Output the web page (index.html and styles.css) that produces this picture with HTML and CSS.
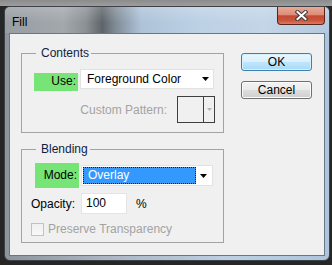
FILE: index.html
```html
<!DOCTYPE html>
<html>
<head>
<meta charset="utf-8">
<title>Fill</title>
<link rel="stylesheet" href="styles.css">
</head>
<body>
<div class="window">
  <div class="titlebar">
    <span class="title">Fill</span>
    <div class="close">
      <svg width="13" height="11" viewBox="0 0 13 11">
        <path d="M2.5 2 L10.5 9 M10.5 2 L2.5 9" stroke="#3b3b3b" stroke-width="4" stroke-linecap="square"/>
        <path d="M2.5 2 L10.5 9 M10.5 2 L2.5 9" stroke="#ffffff" stroke-width="2" stroke-linecap="square"/>
      </svg>
    </div>
  </div>
  <div class="client">
    <div class="groups">
      <fieldset class="group contents">
        <legend>Contents</legend>
        <div class="row use-row">
          <label class="hl">Use:</label>
          <div class="select use-select">
            <span class="value">Foreground Color</span>
            <svg class="arrow" width="7" height="4" viewBox="0 0 7 4"><polygon points="0,0 7,0 3.5,4" fill="#000"/></svg>
          </div>
        </div>
        <div class="row pattern-row">
          <span class="disabled">Custom Pattern:</span>
          <div class="pattern">
            <div class="swatch"></div>
            <div class="pdrop"><svg width="5" height="3" viewBox="0 0 5 3"><polygon points="0,0 5,0 2.5,3" fill="#b4b4b4"/></svg></div>
          </div>
        </div>
      </fieldset>
      <fieldset class="group blending">
        <legend>Blending</legend>
        <div class="row mode-row">
          <label class="hl mode-hl">Mode:</label>
          <div class="select mode-select">
            <span class="value selected">Overlay</span>
            <svg class="arrow" width="7" height="4" viewBox="0 0 7 4"><polygon points="0,0 7,0 3.5,4" fill="#000"/></svg>
          </div>
        </div>
        <div class="row opacity-row">
          <label class="op-label">Opacity:</label>
          <div class="input">100</div>
          <span class="pct">%</span>
        </div>
        <div class="row check-row">
          <span class="checkbox"></span>
          <span class="disabled">Preserve Transparency</span>
        </div>
      </fieldset>
    </div>
    <div class="buttons">
      <button class="btn default">OK</button>
      <button class="btn">Cancel</button>
    </div>
  </div>
</div>
</body>
</html>
```

FILE: styles.css
```css
html, body {
  margin: 0;
  padding: 0;
}
body {
  width: 332px;
  height: 265px;
  overflow: hidden;
  background: linear-gradient(to bottom, #8c8c8c 0, #9d9d9d 6px, #262626 6px);
  font-family: "Liberation Sans", Arial, sans-serif;
  font-size: 12px;
  color: #000;
}
.window {
  box-sizing: border-box;
  margin: 6px 0 0 4px;
  width: 326px;
  height: 255px;
  border: 1px solid #3d4249;
  border-radius: 6px;
  background: linear-gradient(to right, #8d949b 0, #aab5c2 30%, #bcd0e4 70%, #adc4db 100%);
  display: flex;
  flex-direction: column;
  overflow: hidden;
}
.titlebar {
  height: 26px;
  flex: none;
  display: flex;
  align-items: flex-start;
  background:
    linear-gradient(to bottom, rgba(255,255,255,0.18), rgba(255,255,255,0) 60%),
    linear-gradient(to right, #979da2 0, #a3a8ad 18%, #8b9095 25%, #5e6469 30%, #7f8a95 34%, #aec3d8 42%, #bdd1e5 60%, #c3d5e7 80%, #b4c9de 100%);
}
.title {
  padding: 9px 0 0 7px;
  font-size: 12px;
  line-height: 12px;
  color: #000;
}
.close {
  margin-left: auto;
  margin-right: 4px;
  width: 48px;
  height: 18px;
  box-sizing: border-box;
  border: 1px solid #5a2518;
  border-top: none;
  border-radius: 0 0 4px 4px;
  background: linear-gradient(to bottom, #e9aa98 0, #dc8c77 45%, #c54a31 52%, #c9563f 80%, #dd7b62 100%);
  display: flex;
  align-items: center;
  justify-content: center;
}
.client {
  flex: 1;
  margin: 0 4px 4px 4px;
  border: 1px solid #66778a;
  background: #f0f0f0;
  display: flex;
  align-items: flex-start;
  padding: 12px 0 0 11px;
}
.groups {
  width: 203px;
  display: flex;
  flex-direction: column;
}
.group {
  margin: 0;
  min-width: 0;
  border: 1px solid #a3a3a3;
  padding: 0 8px 9px 12px;
}
.group legend {
  padding: 0 2px 0 5px;
  margin-left: 2px;
  line-height: 15px;
  color: #0d1f3f;
}
.contents {
  padding-top: 8px;
}
.blending {
  margin-top: 9px;
  padding-top: 6px;
  padding-bottom: 6px;
}
.row {
  display: flex;
  align-items: flex-start;
}
.hl {
  box-sizing: border-box;
  background: #77e476;
  width: 44px;
  text-align: right;
  padding-right: 2px;
}
.use-row .hl {
  margin-top: 4px;
  height: 18px;
  line-height: 16px;
}
.select {
  box-sizing: border-box;
  background: #fff;
  border: 1px solid #e2e2e2;
  display: flex;
  align-items: center;
}
.select .arrow {
  margin-left: auto;
  margin-right: 4px;
  flex: none;
}
.use-select {
  margin-left: 2px;
  width: 134px;
  height: 20px;
}
.use-select .value {
  padding-left: 6px;
}
.pattern-row {
  margin-top: 5px;
  justify-content: flex-end;
  align-items: center;
  gap: 10px;
}
.disabled {
  color: #a3a3a3;
}
.pattern {
  width: 38px;
  height: 27px;
  box-sizing: border-box;
  border: 1px solid #3f3f3f;
  display: flex;
  background: #f0f0f0;
}
.swatch {
  flex: 1;
  border-right: 1px solid #3f3f3f;
}
.pdrop {
  width: 10px;
  display: flex;
  align-items: center;
  justify-content: center;
}
.mode-hl {
  margin-left: 1px;
  height: 25px;
  line-height: 24px;
}
.mode-select {
  margin-left: 2px;
  margin-top: 2px;
  width: 132px;
  height: 21px;
  padding: 1px;
}
.mode-select .value {
  box-sizing: border-box;
  flex: 0 0 113px;
  height: 17px;
  line-height: 15px;
  background: #3399ff;
  color: #fff;
  border: 1px dotted #2a1a00;
  padding-left: 4px;
}
.opacity-row {
  margin-top: 5px;
  margin-left: -3px;
  align-items: center;
}
.op-label {
  width: 50px;
}
.input {
  box-sizing: border-box;
  width: 46px;
  height: 21px;
  background: #fff;
  border: 1px solid #e4e4e4;
  line-height: 19px;
  padding-left: 4px;
}
.pct {
  margin-left: 9px;
}
.check-row {
  margin-top: 8px;
  margin-left: -3px;
  align-items: center;
  gap: 4px;
}
.checkbox {
  box-sizing: border-box;
  width: 13px;
  height: 13px;
  border: 1px solid #c2c2c2;
  background: linear-gradient(#f0f0f0, #f8f8f8);
}
.buttons {
  margin-left: 17px;
  margin-top: 7px;
  display: flex;
  flex-direction: column;
  gap: 10px;
}
.btn {
  box-sizing: border-box;
  width: 71px;
  height: 18px;
  padding: 0;
  font-family: "Liberation Sans", Arial, sans-serif;
  font-size: 12px;
  line-height: 16px;
  color: #000;
  border: 1px solid #707070;
  border-radius: 3px;
  background: linear-gradient(to bottom, #f3f3f3 0, #ebebeb 48%, #dddddd 52%, #cfcfcf 100%);
  box-shadow: inset 0 0 0 1px #fbfbfb;
}
.btn.default {
  border-color: #3c7fb1;
  background: linear-gradient(to bottom, #eaf6fd 0, #d9f0fc 48%, #bee6fd 52%, #a7d9f5 100%);
  box-shadow: inset 0 0 0 1px #d7f0fd;
}
```
